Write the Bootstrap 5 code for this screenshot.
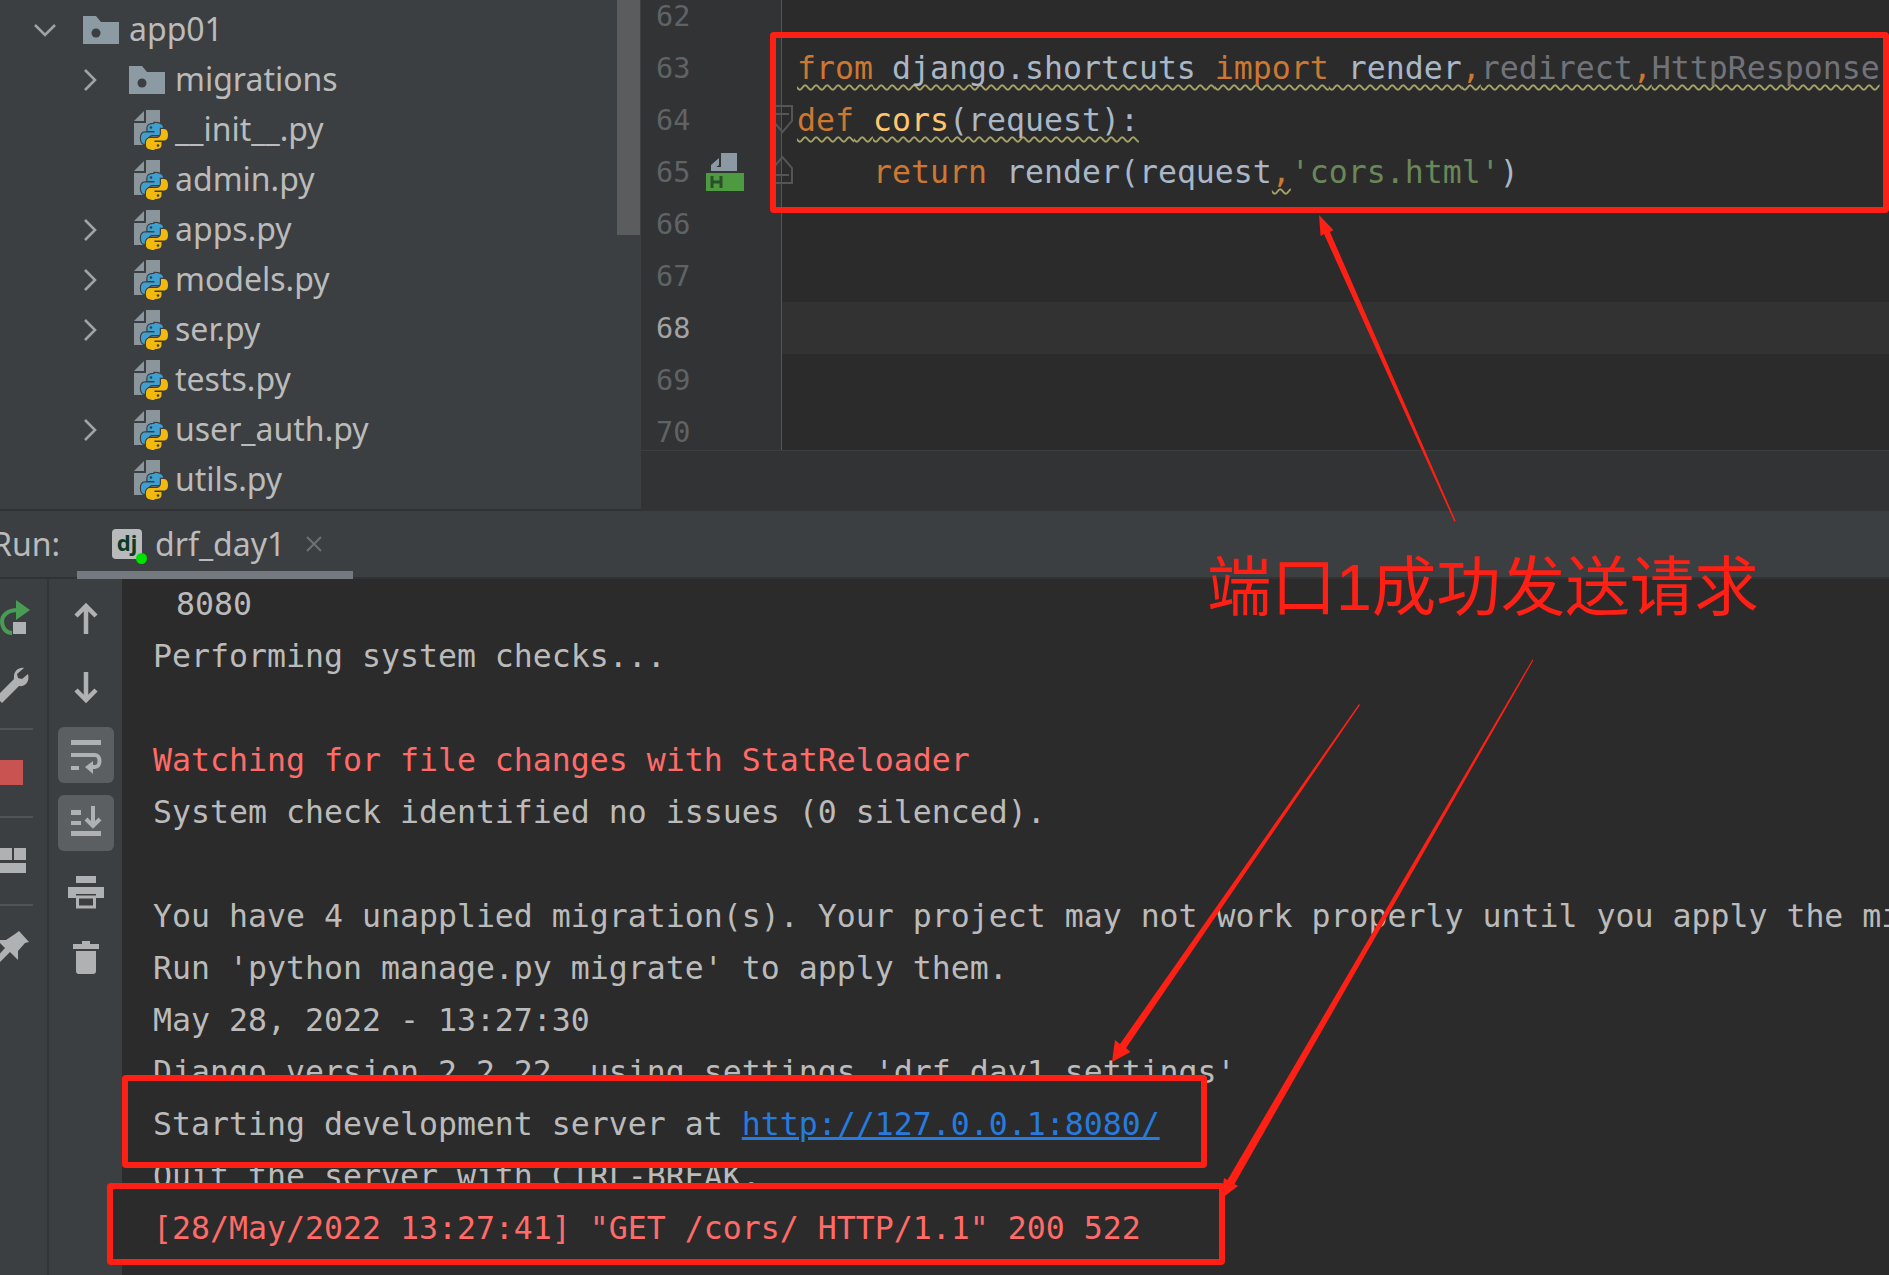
<!DOCTYPE html>
<html lang="en">
<head>
<meta charset="utf-8">
<title>drf_day1</title>
<link href="https://cdn.jsdelivr.net/npm/bootstrap@5.3.0/dist/css/bootstrap.min.css" rel="stylesheet">
<style>
html,body{margin:0;background:#2b2b2b}
.ide{width:1889px;height:1275px;position:relative;overflow:hidden;background:#2b2b2b;font-family:"Noto Sans","Liberation Sans",sans-serif}
.top-pane{height:511px}
.tree{width:641px;height:511px;background:#3c3f41;border-bottom:2px solid #2f3132}
.tree-list{padding-top:5px;width:617px}
.scroll-thumb{width:23px;height:235px;background:#5a5c5e;margin-right:1px}
.tree-row{height:50px;color:#bbb;font-size:32px;line-height:48px;white-space:nowrap}
.tree-lbl{position:relative;top:-1px}
.d1{padding-left:33px}.d2{padding-left:83px}
.tw{width:50px;flex:none}.d2 .tw{width:46px}
.tw svg,.ic{display:block}
.ic-f{width:36px;height:28px;margin-right:10px;flex:none}
.ic-p{width:34px;height:40px;margin-left:5px;margin-right:7px;flex:none}
.ed{width:1248px;height:511px;background:#313335}
.ed-view{height:451px;overflow:hidden;background:#2b2b2b;border-bottom:1px solid #3c3f41}
.ed-scroll{margin-top:-10px}
.ln{height:52px;font-family:"DejaVu Sans Mono","Liberation Mono",monospace;font-size:31.55px;line-height:52px;white-space:pre}
.gut{width:140px;flex:none;background:#313335;color:#606366;font-size:28.5px;padding-left:15px;padding-top:2px}
.gut svg{margin-left:16px;flex:none;margin-top:-2px}
.cd{flex:1;border-left:1px solid #555;padding-left:15px;color:#a9b7c6;position:relative}
.ln.cur .cd{background:#323232}.ln.cur .gut{color:#a4a3a3}
.fold{position:absolute;left:-11px;top:0}
.kw{color:#cc7832}.fn{color:#ffc66d}.st{color:#6a8759}.dim{color:#72737a}
.wv{text-decoration:underline wavy #a5a268 1.5px;text-underline-offset:5px;text-decoration-skip-ink:none}
.run-head{height:68px;background:#3c3f41;border-bottom:2px solid #323232;font-size:32px;color:#bbb}
.run-label{margin-left:-8px;width:85px}
.run-tab{width:276px;height:68px;border-bottom:8px solid #747a80;margin-bottom:-2px;padding-left:35px;padding-top:6px}
.dj{width:30px;height:30px;background:#b8babb;border-radius:4px;color:#0b3c2a;font-size:22px;font-weight:700;line-height:26px;text-align:center;position:relative;margin-right:13px;flex:none}
.dj-dot{width:11px;height:11px;border-radius:50%;background:#00e000;position:absolute;right:-5px;bottom:-5px}
.tab-x{margin-left:19px}
.run-body{height:696px}
.tb1{width:47px;background:#3c3f41;flex:none;overflow:hidden;padding-top:5px}
.tb-gap{width:2px;background:#323436;flex:none}
.tb2{width:73px;background:#3c3f41;flex:none;padding-top:5px}
.tb-sep{height:2px;width:33px;background:#515457;flex:none}
.tb1 svg,.tb2 svg{display:block;flex:none}
.tb-sep-first{margin-top:8px}
.tb-btn-a{margin-top:7px}.tb-btn-b{margin-top:12px}.tb-btn-c{margin-top:7px}
.cons{flex:1;min-width:0;overflow:hidden;padding-left:31px;font-family:"DejaVu Sans Mono","Liberation Mono",monospace;font-size:31.55px;line-height:52px;color:#bbb;margin-top:-1px}
.cons-ln{height:52px;white-space:pre}
.cons-wrapped{padding-left:4px}
.err{color:#ff6b68}
.cons a{color:#287bde;text-decoration:underline}
.over{position:relative;z-index:2}
.mark-box{position:absolute;border:6px solid #ff2015;border-radius:4px}
.mb-code{left:770px;top:32px;width:1119px;height:181px}
.mb-srv{left:122px;top:1075px;width:1085px;height:93px;background:#2b2b2b;z-index:1}
.mb-log{left:107px;top:1183px;width:1118px;height:82px;background:#2b2b2b;z-index:1}
.ann{position:absolute;left:0;top:0;z-index:3;pointer-events:none}
.note{position:absolute;left:1207px;top:542px;z-index:3;color:#ff2015;font-family:"Liberation Sans","Noto Sans CJK SC",sans-serif;font-size:64.5px;line-height:92px;white-space:nowrap}
</style>
</head>
<body>
<svg width="0" height="0" class="position-absolute">
<defs>
<symbol id="chev-r" viewBox="0 0 14 24"><path d="M2 2l10 10L2 22" fill="none" stroke="#a0a3a5" stroke-width="2.6"/></symbol>
<symbol id="folder" viewBox="0 0 36 28"><path d="M0 0H13L18 6H36V28H0Z" fill="#8c9aa4"/><circle cx="13" cy="17" r="4.5" fill="#3c3f41"/></symbol>
<symbol id="pyfile" viewBox="0 0 34 40">
<path d="M0 11L10 1V11Z" fill="#8a959c"/><path d="M12 0H26V35H0V13H12Z" fill="#8a959c"/>
<g stroke="#3c3f41" stroke-width="2.4" paint-order="stroke">
<path d="M20.500 14c-5 0-7 1-7 4v3h7v1.500H11c-3 0-4 2.500-4 5.500s1 6 4 6h3v-4c0-3 2-5 5-5h6c2 0 4-2 4-4v-3.500c0-3-3.500-4.500-8.500-4.500z" fill="#3f9fcf"/>
<path d="M20.500 39c5 0 7-1 7-4v-3h-7v-1.500H30c3 0 4-2.500 4-5.500s-1-6-4-6h-3v4c0 3-2 5-5 5h-6c-2 0-4 2-4 4v3.500c0 3 3.500 4.500 8.500 4.500z" fill="#f2b90f"/>
</g>
<circle cx="17" cy="17.500" r="1.300" fill="#3c3f41"/><circle cx="24" cy="35.500" r="1.300" fill="#3c3f41"/>
</symbol>
</defs>
</svg>
<div class="ide d-flex flex-column">
  <div class="top-pane d-flex flex-shrink-0">
    <aside class="tree d-flex justify-content-between flex-shrink-0">
      <div class="tree-list">
        <div class="tree-row d1 d-flex align-items-center"><span class="tw"><svg width="24" height="14" viewBox="0 0 24 14"><path d="M2 2l10 10L22 2" fill="none" stroke="#a0a3a5" stroke-width="2.6"/></svg></span><svg class="ic-f"><use href="#folder"/></svg><span class="tree-lbl">app01</span></div>
        <div class="tree-row d2 d-flex align-items-center"><span class="tw"><svg width="14" height="24"><use href="#chev-r"/></svg></span><svg class="ic-f"><use href="#folder"/></svg><span class="tree-lbl">migrations</span></div>
        <div class="tree-row d2 d-flex align-items-center"><span class="tw"></span><svg class="ic-p"><use href="#pyfile"/></svg><span class="tree-lbl">__init__.py</span></div>
        <div class="tree-row d2 d-flex align-items-center"><span class="tw"></span><svg class="ic-p"><use href="#pyfile"/></svg><span class="tree-lbl">admin.py</span></div>
        <div class="tree-row d2 d-flex align-items-center"><span class="tw"><svg width="14" height="24"><use href="#chev-r"/></svg></span><svg class="ic-p"><use href="#pyfile"/></svg><span class="tree-lbl">apps.py</span></div>
        <div class="tree-row d2 d-flex align-items-center"><span class="tw"><svg width="14" height="24"><use href="#chev-r"/></svg></span><svg class="ic-p"><use href="#pyfile"/></svg><span class="tree-lbl">models.py</span></div>
        <div class="tree-row d2 d-flex align-items-center"><span class="tw"><svg width="14" height="24"><use href="#chev-r"/></svg></span><svg class="ic-p"><use href="#pyfile"/></svg><span class="tree-lbl">ser.py</span></div>
        <div class="tree-row d2 d-flex align-items-center"><span class="tw"></span><svg class="ic-p"><use href="#pyfile"/></svg><span class="tree-lbl">tests.py</span></div>
        <div class="tree-row d2 d-flex align-items-center"><span class="tw"><svg width="14" height="24"><use href="#chev-r"/></svg></span><svg class="ic-p"><use href="#pyfile"/></svg><span class="tree-lbl">user_auth.py</span></div>
        <div class="tree-row d2 d-flex align-items-center"><span class="tw"></span><svg class="ic-p"><use href="#pyfile"/></svg><span class="tree-lbl">utils.py</span></div>
      </div>
      <div class="scroll-thumb"></div>
    </aside>
    <section class="ed flex-grow-1">
      <div class="ed-view">
        <div class="ed-scroll">
          <div class="ln d-flex"><div class="gut d-flex align-items-center">62</div><div class="cd"></div></div>
          <div class="ln d-flex"><div class="gut d-flex align-items-center">63</div><div class="cd"><span class="wv"><span class="kw">from</span> django.shortcuts <span class="kw">import</span> render<span class="kw">,</span><span class="dim">redirect</span><span class="kw">,</span><span class="dim">HttpResponse</span></span></div></div>
          <div class="ln d-flex"><div class="gut d-flex align-items-center">64</div><div class="cd"><svg class="fold" width="24" height="52" viewBox="0 0 24 52"><path d="M2 12H21V27L11.500 38L2 27Z M5 20H18" fill="none" stroke="#555" stroke-width="2"/></svg><span class="wv"><span class="kw">def</span> <span class="fn">cors</span>(request):</span></div></div>
          <div class="ln d-flex"><div class="gut d-flex align-items-center">65<svg width="38" height="38" viewBox="0 0 38 38"><path d="M5 18V12L13 5V12ZM15 0H31V18H5V14H15Z" fill="#8d99a2"/><rect y="20" width="38" height="18" fill="#4d9a40"/><path d="M6 23v12M15 23v12M6 29h9" stroke="#2b4f2b" stroke-width="3" fill="none"/></svg></div><div class="cd"><svg class="fold" width="24" height="52" viewBox="0 0 24 52"><path d="M2 37H21V22L11.500 11L2 22Z M5 29H18" fill="none" stroke="#555" stroke-width="2"/></svg>    <span class="kw">return</span> render(request<span class="kw wv">,</span><span class="st">'cors.html'</span>)</div></div>
          <div class="ln d-flex"><div class="gut d-flex align-items-center">66</div><div class="cd"></div></div>
          <div class="ln d-flex"><div class="gut d-flex align-items-center">67</div><div class="cd"></div></div>
          <div class="ln d-flex cur"><div class="gut d-flex align-items-center">68</div><div class="cd"></div></div>
          <div class="ln d-flex"><div class="gut d-flex align-items-center">69</div><div class="cd"></div></div>
          <div class="ln d-flex"><div class="gut d-flex align-items-center">70</div><div class="cd"></div></div>
        </div>
      </div>
    </section>
  </div>

  <div class="run-head d-flex align-items-center flex-shrink-0">
    <span class="run-label">Run:</span>
    <div class="run-tab d-flex align-items-center">
      <span class="dj">dj<span class="dj-dot"></span></span>
      <span>drf_day1</span>
      <svg class="tab-x" width="20" height="20" viewBox="0 0 20 20"><path d="M3 3l14 14M17 3L3 17" stroke="#6e7174" stroke-width="2"/></svg>
    </div>
  </div>

  <div class="run-body d-flex flex-grow-1">
    <div class="tb1 d-flex flex-column">
      <svg width="47" height="68" viewBox="0 584 47 68"><path d="M16 600L30 610L16 620Z" fill="#499c54"/><path d="M18 610C7 610 2 616 2 621C2 628 6 633 12 633" fill="none" stroke="#499c54" stroke-width="4"/><rect x="13" y="622" width="13" height="12" fill="#afb1b3"/></svg>
      <svg width="47" height="68" viewBox="0 652 47 68"><path d="M24 668C18 667 13 672 14 679L-4 697L2 703L19 686C25 687 30 682 28 674L22 679L18 678L17 674Z" fill="#afb1b3"/></svg>
      <div class="tb-sep tb-sep-first"></div>
      <svg width="47" height="86" viewBox="0 730 47 86"><rect x="-2" y="760" width="25" height="25" fill="#c75450"/></svg>
      <div class="tb-sep"></div>
      <svg width="47" height="86" viewBox="0 818 47 86"><path d="M0 848H12V860H0ZM14 848H26V860H14ZM0 863H26V873H0Z" fill="#afb1b3"/></svg>
      <div class="tb-sep"></div>
      <svg width="47" height="78" viewBox="0 906 47 78"><path d="M19 931L29 942L25 943L18 951L18 960L10 952L0 962L-4 958L5 948L-3 940L6 940L15 934Z" fill="#afb1b3"/></svg>
    </div>
    <div class="tb-gap"></div>
    <div class="tb2 d-flex flex-column align-items-center">
      <svg width="56" height="68" viewBox="57 584 56 68"><path d="M75 616L85 606L95 616M85 606V634" fill="none" stroke="#afb1b3" stroke-width="4.500"/></svg>
      <svg width="56" height="68" viewBox="57 652 56 68"><path d="M75 690L85 700L95 690M85 672V700" fill="none" stroke="#afb1b3" stroke-width="4.500"/></svg>
      <svg class="tb-btn-a" width="56" height="56" viewBox="57 727 56 56"><rect x="57" y="727" width="56" height="56" rx="6" fill="#5b5f62"/><path d="M70 740H100V745H70ZM70 753H88V757H70ZM70 766H78V770H70Z" fill="#afb1b3"/><path d="M88 755H94C100 755 100 767 94 767H88" fill="none" stroke="#afb1b3" stroke-width="4"/><path d="M92 761L84 767L92 774Z" fill="#afb1b3"/></svg>
      <svg class="tb-btn-b" width="56" height="56" viewBox="57 795 56 56"><rect x="57" y="795" width="56" height="56" rx="6" fill="#5b5f62"/><path d="M70 810H80V815H70ZM70 821H80V825H70ZM70 831H100V836H70Z" fill="#afb1b3"/><path d="M92 806V826M85 819L92 826L99 819" fill="none" stroke="#afb1b3" stroke-width="4"/></svg>
      <svg class="tb-btn-c" width="56" height="68" viewBox="57 858 56 68"><path d="M75 876H95V883H75ZM67 887H103V898H95V894H75V898H67Z" fill="#afb1b3"/><path d="M76.500 897H93.500V907H76.500Z" fill="none" stroke="#afb1b3" stroke-width="3"/></svg>
      <svg width="56" height="68" viewBox="57 926 56 68"><path d="M81 941H89V944H98V949H72V944H81ZM75 951H95V971Q95 974 92 974H78Q75 974 75 971Z" fill="#afb1b3"/></svg>
    </div>
    <div class="cons">
      <div class="cons-ln cons-wrapped"> 8080</div>
      <div class="cons-ln">Performing system checks...</div>
      <div class="cons-ln"></div>
      <div class="cons-ln err">Watching for file changes with StatReloader</div>
      <div class="cons-ln">System check identified no issues (0 silenced).</div>
      <div class="cons-ln"></div>
      <div class="cons-ln">You have 4 unapplied migration(s). Your project may not work properly until you apply the migrations for app(s).</div>
      <div class="cons-ln">Run 'python manage.py migrate' to apply them.</div>
      <div class="cons-ln">May 28, 2022 - 13:27:30</div>
      <div class="cons-ln">Django version 2.2.22, using settings 'drf_day1.settings'</div>
      <div class="cons-ln over">Starting development server at <a href="#">http://127.0.0.1:8080/</a></div>
      <div class="cons-ln">Quit the server with CTRL-BREAK.</div>
      <div class="cons-ln over err">[28/May/2022 13:27:41] "GET /cors/ HTTP/1.1" 200 522</div>
    </div>
  </div>

  <div class="mark-box mb-code"></div>
  <div class="mark-box mb-srv"></div>
  <div class="mark-box mb-log"></div>
  <div class="note">端口1成功发送请求</div>
  <svg class="ann" width="1889" height="1275" viewBox="0 0 1889 1275">
    <path d="M1455.700 521L1454.300 521.500L1324 234L1320.600 236L1319 215L1333.400 230L1330 232Z" fill="#ff2015"/>
    <path d="M1360 705L1359 704L1120 1044L1115 1040L1112 1062L1130.500 1052L1126 1048Z" fill="#ff2015"/>
    <path d="M1533.500 660L1532.500 659.500L1227.500 1180L1224 1178L1221 1199L1238 1186L1234.500 1184Z" fill="#ff2015"/>
  </svg>
</div>
</body>
</html>
